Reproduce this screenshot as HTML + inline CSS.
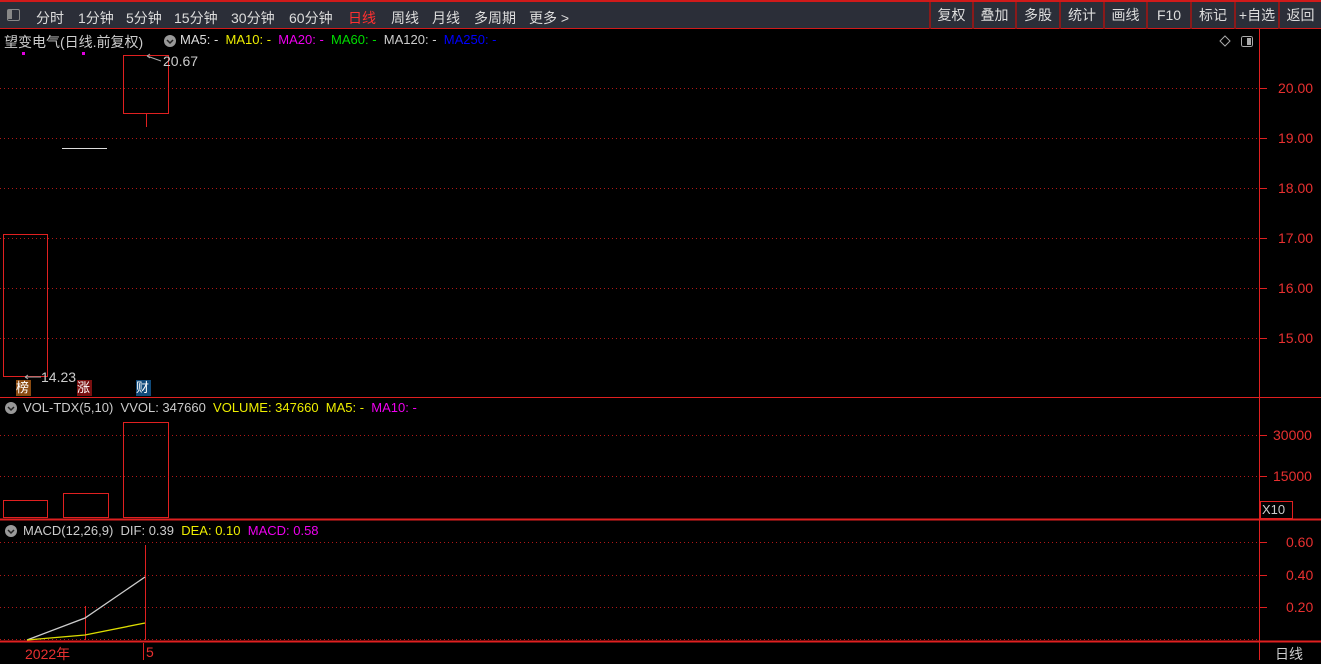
<!DOCTYPE html>
<html><head><meta charset="utf-8"><style>
*{margin:0;padding:0;box-sizing:border-box}
body{width:1321px;height:660px;background:#000;overflow:hidden;position:relative;font-family:"Liberation Sans","Noto Sans CJK SC",sans-serif;font-size:14px;color:#ccc}
.a{position:absolute;white-space:nowrap}
#tb{position:absolute;left:0;top:0;width:1321px;height:29px;background:#2b2e38;border-top:2px solid #d01a1a;border-bottom:1px solid #d01a1a}
#tb .a{top:6px;color:#ddd}
.btn{position:absolute;top:0;height:27px;border-left:2px solid #8a1a1a;color:#ddd;text-align:center;line-height:27px;font-size:14px}
.ax{color:#e83030;font-size:14px}
</style></head><body>
<div id="tb">
<div class="a" style="left:7px;top:7px;width:13px;height:12px;border:1.5px solid #888;border-radius:2px"><div style="position:absolute;left:0;top:0;width:4px;height:9px;background:#888"></div></div>
<div class="a" style="left:36px">分时</div>
<div class="a" style="left:78px">1分钟</div>
<div class="a" style="left:126px">5分钟</div>
<div class="a" style="left:174px">15分钟</div>
<div class="a" style="left:231px">30分钟</div>
<div class="a" style="left:289px">60分钟</div>
<div class="a" style="left:348px;color:#ff3030">日线</div>
<div class="a" style="left:391px">周线</div>
<div class="a" style="left:432px">月线</div>
<div class="a" style="left:474px">多周期</div>
<div class="a" style="left:529px">更多 &gt;</div>
<div class="btn" style="left:929px;width:43px">复权</div>
<div class="btn" style="left:972px;width:43px">叠加</div>
<div class="btn" style="left:1015px;width:44px">多股</div>
<div class="btn" style="left:1059px;width:44px">统计</div>
<div class="btn" style="left:1103px;width:43px">画线</div>
<div class="btn" style="left:1146px;width:44px">F10</div>
<div class="btn" style="left:1190px;width:44px">标记</div>
<div class="btn" style="left:1234px;width:44px">+自选</div>
<div class="btn" style="left:1278px;width:43px">返回</div>
</div>
<svg class="a" style="left:0;top:0" width="1321" height="660" shape-rendering="crispEdges">
<g stroke="#e02020" fill="none">
<line x1="1259.5" y1="29" x2="1259.5" y2="660"/>
<line x1="0" y1="397.5" x2="1321" y2="397.5"/>
<line x1="0" y1="519.5" x2="1321" y2="519.5" stroke-width="2"/>
<line x1="0" y1="641.5" x2="1321" y2="641.5" stroke-width="2"/>
<g stroke-dasharray="1 3" stroke="#b01818">
<line x1="0" y1="88.5" x2="1259" y2="88.5"/><line x1="0" y1="138.5" x2="1259" y2="138.5"/>
<line x1="0" y1="188.5" x2="1259" y2="188.5"/><line x1="0" y1="238.5" x2="1259" y2="238.5"/>
<line x1="0" y1="288.5" x2="1259" y2="288.5"/><line x1="0" y1="338.5" x2="1259" y2="338.5"/>
<line x1="0" y1="435.5" x2="1259" y2="435.5"/><line x1="0" y1="476.5" x2="1259" y2="476.5"/>
<line x1="0" y1="542.5" x2="1259" y2="542.5"/><line x1="0" y1="575.5" x2="1259" y2="575.5"/>
<line x1="0" y1="607.5" x2="1259" y2="607.5"/><line x1="0" y1="639.5" x2="1259" y2="639.5"/>
</g>
<g>
<line x1="1260" y1="88.5" x2="1267" y2="88.5"/><line x1="1260" y1="138.5" x2="1267" y2="138.5"/><line x1="1260" y1="188.5" x2="1267" y2="188.5"/><line x1="1260" y1="238.5" x2="1267" y2="238.5"/><line x1="1260" y1="288.5" x2="1267" y2="288.5"/><line x1="1260" y1="338.5" x2="1267" y2="338.5"/>
<line x1="1260" y1="435.5" x2="1267" y2="435.5"/><line x1="1260" y1="476.5" x2="1267" y2="476.5"/>
<line x1="1260" y1="542.5" x2="1267" y2="542.5"/><line x1="1260" y1="575.5" x2="1267" y2="575.5"/><line x1="1260" y1="607.5" x2="1267" y2="607.5"/>
</g>
<rect x="3.5" y="234.5" width="44" height="142"/>
<rect x="123.5" y="55.5" width="45" height="58"/>
<line x1="146.5" y1="114" x2="146.5" y2="127"/>
<rect x="3.5" y="500.5" width="44" height="17"/>
<rect x="63.5" y="493.5" width="45" height="24"/>
<rect x="123.5" y="422.5" width="45" height="95"/>
<rect x="1260.5" y="501.5" width="32" height="17"/>
<line x1="85.5" y1="606" x2="85.5" y2="640"/>
<line x1="145.5" y1="545" x2="145.5" y2="640"/>
<line x1="143.5" y1="643" x2="143.5" y2="660"/>
</g>
<line x1="62" y1="148.5" x2="107" y2="148.5" stroke="#ddd"/>
<polyline points="27,640 85,618 145,577" fill="none" stroke="#ccc" stroke-width="1.3" shape-rendering="auto"/>
<polyline points="27,640 85,635 145,623" fill="none" stroke="#dddd00" stroke-width="1.3" shape-rendering="auto"/>
<rect x="22" y="52" width="3" height="3" fill="#e000e0"/><rect x="82" y="52" width="3" height="3" fill="#e000e0"/>
<path d="M1225 36 l5 5 -5 5 -5 -5z" fill="none" stroke="#aaa" shape-rendering="auto"/>
<rect x="1241.5" y="36.5" width="11" height="10" rx="2" fill="none" stroke="#aaa"/><rect x="1247" y="38" width="4" height="7" fill="#aaa"/>
<g shape-rendering="auto">
<circle cx="170" cy="41" r="6" fill="#999"/><path d="M167 40 l3 3 3-3" stroke="#222" fill="none" stroke-width="1.5"/>
<circle cx="11" cy="408" r="6" fill="#999"/><path d="M8 407 l3 3 3-3" stroke="#222" fill="none" stroke-width="1.5"/>
<circle cx="11" cy="531" r="6" fill="#999"/><path d="M8 530 l3 3 3-3" stroke="#222" fill="none" stroke-width="1.5"/>
<path d="M147 56 l14 5 M147 56 l3 -2 M147 56 l3 2" stroke="#aaa" fill="none"/>
<path d="M25 377 l16 0 M25 377 l3 -2 M25 377 l3 2" stroke="#aaa" fill="none"/>
</g>
</svg>
<div class="a" style="left:4px;top:32px">望变电气(日线.前复权)</div>
<div class="a" style="left:180px;top:32px;font-size:13px"><span style="color:#ddd">MA5: -</span>&nbsp; <span style="color:#ee0">MA10: -</span>&nbsp; <span style="color:#e0e">MA20: -</span>&nbsp; <span style="color:#0d0">MA60: -</span>&nbsp; <span style="color:#ccc">MA120: -</span>&nbsp; <span style="color:#00f">MA250: -</span></div>
<div class="a" style="left:163px;top:53px;color:#ccc">20.67</div>
<div class="a" style="left:41px;top:369px;color:#ccc">14.23</div>
<div class="a" style="left:16px;top:380px;width:15px;height:16px;background:#8a4a10;color:#fff;font-size:13px;line-height:16px">榜</div>
<div class="a" style="left:77px;top:380px;width:15px;height:16px;background:#7a1010;color:#fff;font-size:13px;line-height:16px">涨</div>
<div class="a" style="left:136px;top:380px;width:15px;height:16px;background:#104a7a;color:#fff;font-size:13px;line-height:16px">财</div>
<div class="a" style="left:23px;top:400px;font-size:13px"><span style="color:#ccc">VOL-TDX(5,10)&nbsp; VVOL: 347660</span>&nbsp; <span style="color:#ee0">VOLUME: 347660&nbsp; MA5: -</span>&nbsp; <span style="color:#e0e">MA10: -</span></div>
<div class="a" style="left:23px;top:523px;font-size:13px"><span style="color:#ccc">MACD(12,26,9)&nbsp; DIF: 0.39</span>&nbsp; <span style="color:#ee0">DEA: 0.10</span>&nbsp; <span style="color:#e0e">MACD: 0.58</span></div>
<div class="a ax" style="left:1278px;top:80px">20.00</div>
<div class="a ax" style="left:1278px;top:130px">19.00</div>
<div class="a ax" style="left:1278px;top:180px">18.00</div>
<div class="a ax" style="left:1278px;top:230px">17.00</div>
<div class="a ax" style="left:1278px;top:280px">16.00</div>
<div class="a ax" style="left:1278px;top:330px">15.00</div>
<div class="a ax" style="left:1273px;top:427px">30000</div>
<div class="a ax" style="left:1273px;top:468px">15000</div>
<div class="a" style="left:1262px;top:502px;color:#ccc;font-size:13px">X10</div>
<div class="a ax" style="left:1286px;top:534px">0.60</div>
<div class="a ax" style="left:1286px;top:567px">0.40</div>
<div class="a ax" style="left:1286px;top:599px">0.20</div>
<div class="a ax" style="left:25px;top:644px">2022年</div>
<div class="a ax" style="left:146px;top:644px">5</div>
<div class="a" style="left:1275px;top:644px;color:#ccc">日线</div>
</body></html>
